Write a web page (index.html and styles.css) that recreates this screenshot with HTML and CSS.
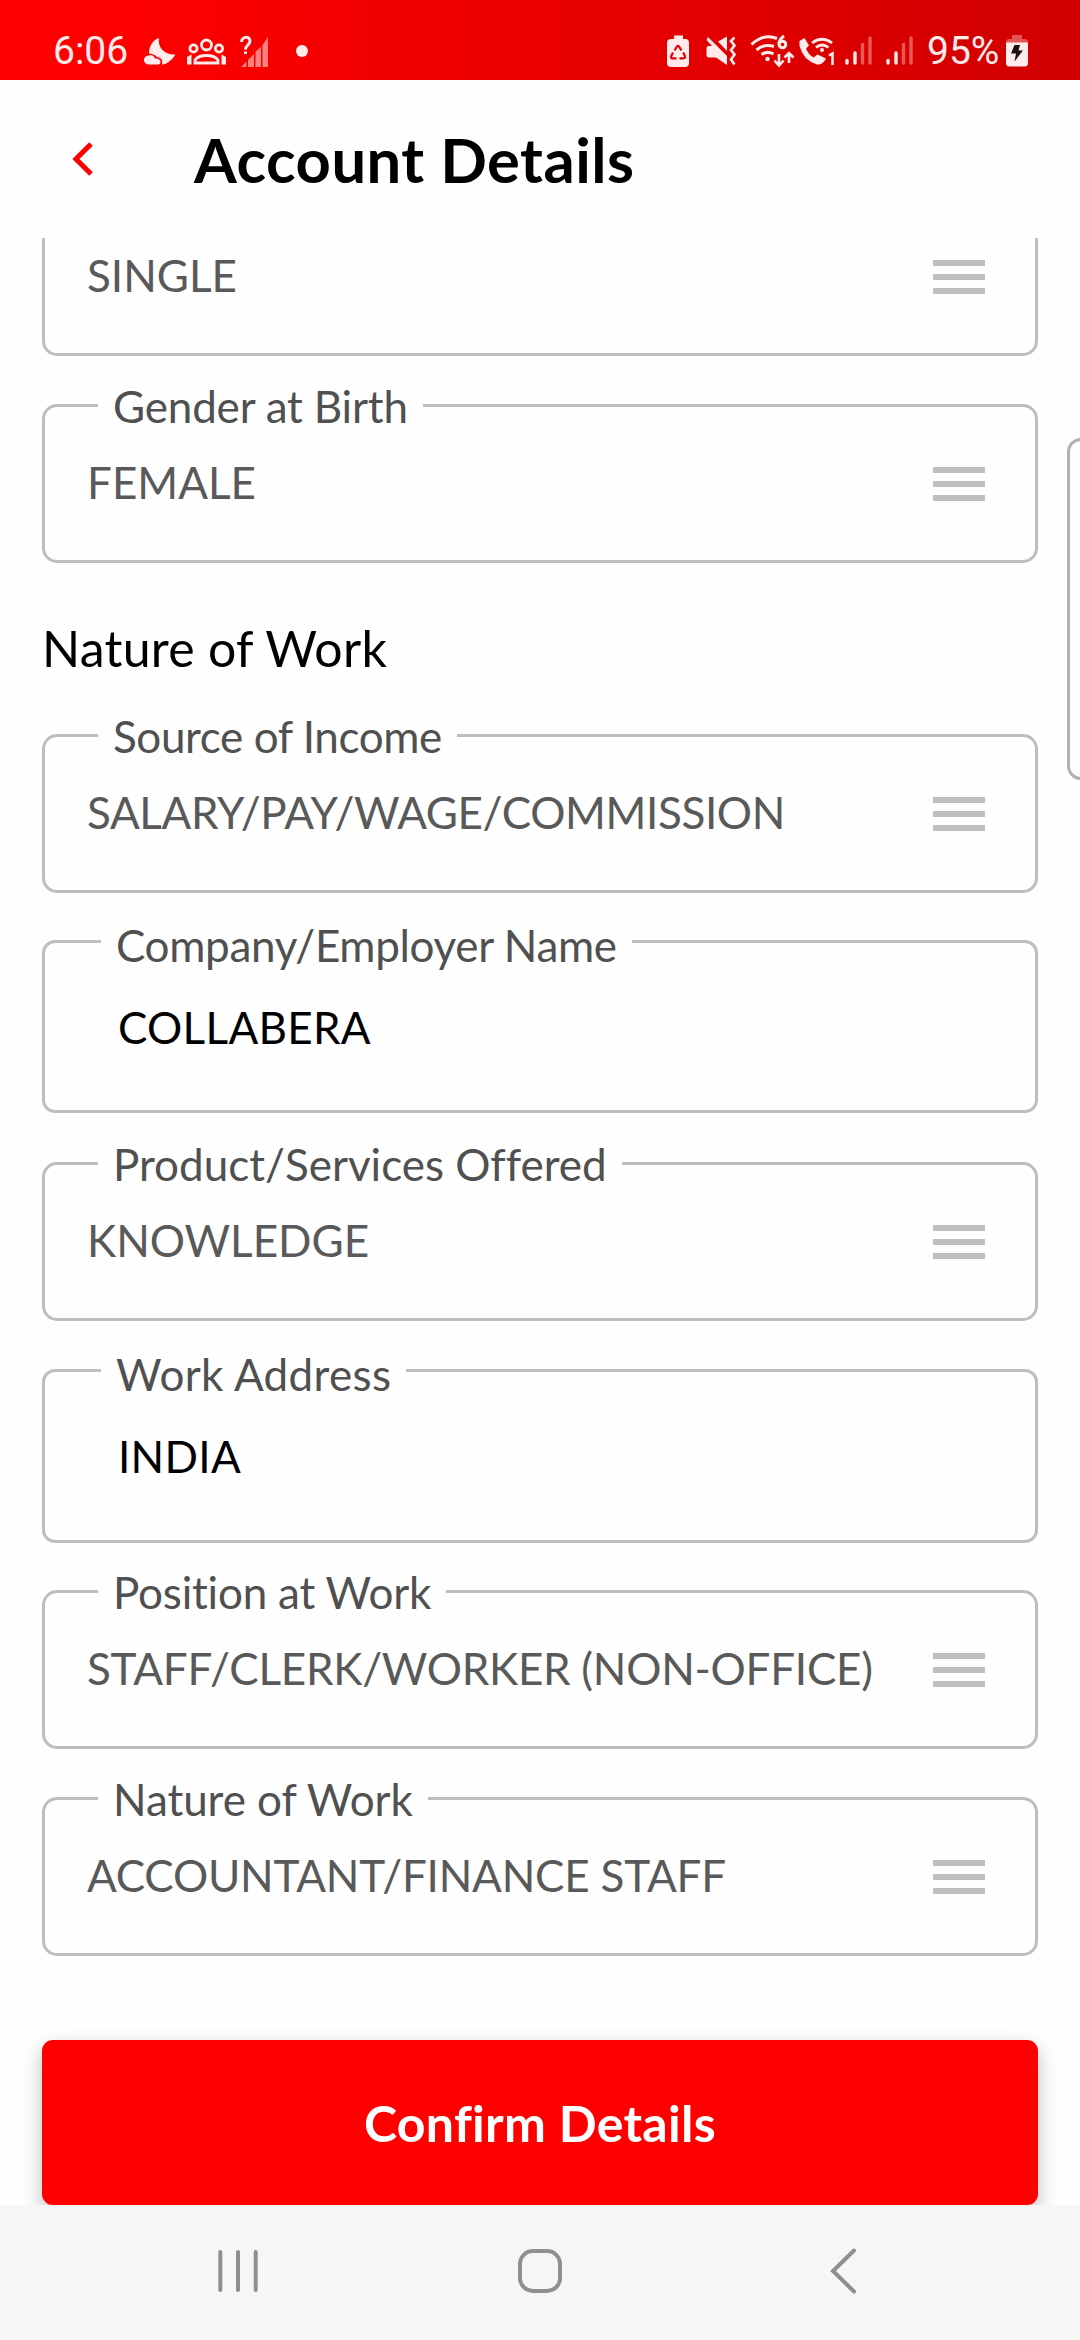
FILE: index.html
```html
<!DOCTYPE html>
<html lang="en">
<head>
<meta charset="utf-8">
<title>Account Details</title>
<link rel="stylesheet" href="styles.css">
</head>
<body>
<div class="screen">
  <div class="status-bar">
    <span class="status-text clock">6:06</span>
    <svg class="status-icons status-left" width="180" height="80" viewBox="140 0 180 80" fill="#ffebeb">
      <path d="M159 38C157.500 46 163 55 175.500 54.500C172 60 167 64.500 162 64.500C163 60 161 57.500 157 57C155 55 152 53.500 149 53.500C149 47 152 40.500 159 38Z"/>
      <path d="M148.500 64.500C142.500 64.500 142.500 55.500 148.500 55.500C151.500 54 154 56 155 58.500C161.500 57.500 162 64.500 158 64.500Z"/>
      <g fill="none" stroke="#ffebeb" stroke-width="2.800">
        <circle cx="206.500" cy="45" r="5"/>
        <circle cx="193.500" cy="48.500" r="3.600"/>
        <circle cx="219" cy="48.500" r="3.600"/>
        <path d="M195 63V60Q198 55.500 206.500 55.500T218 60V63Z"/>
      </g>
      <path d="M187 64.500V57L191.500 54.500V64.500ZM226 64.500V57L221.500 54.500V64.500Z"/>
      <path fill="#ff8080" d="M241 67L246.500 61.500V67ZM248 60L254 54V67H248ZM255.500 52L261 46.500V67H255.500ZM262.500 45L268 37V67H262.500Z"/>
      <path d="M241.500 42C242 36 250 36 250 41C250 45 245.500 45 245.500 49.500M245.500 51.500V54" fill="none" stroke="#ffebeb" stroke-width="3"/>
      <circle cx="302" cy="51" r="6"/>
    </svg>
    <svg class="status-icons status-right" width="260" height="80" viewBox="660 0 260 80" fill="#ffebeb">
      <path d="M674 35.500H683V39H685.500Q689 39 689 43V63Q689 67 685 67H671Q667 67 667 63V43Q667 39 671 39H674Z"/>
      <path fill="none" stroke="#df0000" stroke-width="2.200" d="M674.500 50.500L677 46.500Q678 45 679 46.500L681.500 50.500M683.200 52.500L685 56Q685.500 58.300 683.500 58.300H679.500M676.500 58.300H672.500Q670.500 58.300 671.300 56L673 52.500"/>
      <path d="M708 37L727 56V65L716 57.500H709Q706.500 57.500 706.500 55V48Q706.500 46 709 46H712L706.500 40ZM718 41.500L727 36.500V51Z"/>
      <path d="M734.500 37.500L731 41L734.500 45.500L731 50L734.500 54.500L731 59.500L734.500 64.500" fill="none" stroke="#ffebeb" stroke-width="2.600"/>
      <g fill="none" stroke="#ffebeb" stroke-width="3">
        <path d="M751.500 44.500Q764 33 777 38.500M756.500 50Q764 43.500 774 46.500M761.500 54.500Q767 50.500 773.500 54"/>
        <path d="M784 36Q778.500 40 779 44.500"/>
        <circle cx="782.500" cy="44.500" r="3.300"/>
        <path d="M779 54V65M774.500 60.500L779 65.500L783.500 60.500M789 63V53M784.500 57.500L789 53L793.500 57.500" stroke-width="2.600"/>
      </g>
      <circle cx="767.500" cy="59" r="2.200"/>
      <path d="M799.500 41L804.500 38L809 45.500L806 48.500Q808 54 813.500 57.500L817.500 54.500L826 58.500Q823 65 817 64.500Q803 60 799.500 46Z"/>
      <path d="M812 43Q822 35.500 832 43M816 47.500Q822 42.500 828.500 47.500" fill="none" stroke="#ffebeb" stroke-width="2.800"/>
      <circle cx="822" cy="50" r="2"/>
      <path d="M829 55.500L832.500 53.500V65" fill="none" stroke="#ffebeb" stroke-width="2.500"/>
      <g stroke="#ffebeb" stroke-width="3.400" stroke-linecap="round">
        <path d="M847 60.500V63M855 53V63M888 60.500V63M896 53V63"/>
        <path opacity=".38" d="M862.500 44.500V63M870 38V63M903.500 44.500V63M911 38V63"/>
      </g>
    </svg>
    <span class="status-text percent">95%</span>
    <svg class="battery" width="22" height="32" viewBox="0 0 22 32">
      <path fill="#e65555" d="M6 0H16V4H19Q22 4 22 8H0Q0 4 3 4H6Z"/>
      <path fill="#ffebeb" d="M0 7.500H22V28Q22 31.500 18.500 31.500H3.500Q0 31.500 0 28Z"/>
      <path fill="#1a1010" d="M8.500 10H14L12.500 15.500H17L8.500 26.500L10 18.500H5Z"/>
    </svg>
  </div>

  <header class="app-header">
    <svg class="back" width="22" height="34" viewBox="0 0 22 34"><path d="M19 2L4 17L19 32" fill="none" stroke="#f00" stroke-width="5"/></svg>
    <h1 class="title">Account Details</h1>
  </header>

  <main class="content">
    <section class="field select first">
      <span class="value">SINGLE</span><span class="menu"><i></i><i></i><i></i></span>
    </section>
    <section class="field select gender">
      <span class="label"><span>Gender at Birth</span></span>
      <span class="value">FEMALE</span><span class="menu"><i></i><i></i><i></i></span>
    </section>
    <h2 class="section-title">Nature of Work</h2>
    <section class="field select income">
      <span class="label"><span>Source of Income</span></span>
      <span class="value">SALARY/PAY/WAGE/COMMISSION</span><span class="menu"><i></i><i></i><i></i></span>
    </section>
    <section class="field input company">
      <span class="label"><span>Company/Employer Name</span></span>
      <span class="value">COLLABERA</span>
    </section>
    <section class="field select">
      <span class="label"><span>Product/Services Offered</span></span>
      <span class="value">KNOWLEDGE</span><span class="menu"><i></i><i></i><i></i></span>
    </section>
    <section class="field input address">
      <span class="label"><span>Work Address</span></span>
      <span class="value">INDIA</span>
    </section>
    <section class="field select position">
      <span class="label"><span>Position at Work</span></span>
      <span class="value">STAFF/CLERK/WORKER (NON-OFFICE)</span><span class="menu"><i></i><i></i><i></i></span>
    </section>
    <section class="field select nature">
      <span class="label"><span>Nature of Work</span></span>
      <span class="value">ACCOUNTANT/FINANCE STAFF</span><span class="menu"><i></i><i></i><i></i></span>
    </section>
    <button class="confirm">Confirm Details</button>
  </main>

  <nav class="nav-bar">
    <svg width="42" height="44" viewBox="0 0 42 44"><path d="M3.300 3V41M21 3V41M38.700 3V41" stroke="#8f8f8f" stroke-width="4" stroke-linecap="round"/></svg>
    <svg width="46" height="46" viewBox="0 0 46 46"><rect x="3" y="3" width="40" height="40" rx="13" fill="none" stroke="#8f8f8f" stroke-width="4"/></svg>
    <svg width="28" height="46" viewBox="0 0 28 46"><path d="M25 2.500L4 23L25 43.500" fill="none" stroke="#8f8f8f" stroke-width="4" stroke-linecap="round"/></svg>
  </nav>
  <div class="edge-handle"></div>
</div>
</body>
</html>
```
FILE: styles.css
```css
* { box-sizing: border-box; }
body { margin: 0; background: #fefefe; font-family: Lato, sans-serif; }
.screen {
  position: relative; width: 1080px; height: 2340px; overflow: hidden;
  display: flex; flex-direction: column; background: #fefefe;
}
.status-bar {
  height: 80px; flex: none; display: flex; align-items: center;
  padding-left: 53px; background: linear-gradient(90deg, #f00 10%, #d00000);
}
.status-icons { flex: none; }
.status-text {
  height: 80px; padding-top: 21px; font-family: Roboto, sans-serif;
  font-size: 39px; line-height: 60px; color: #ffebeb;
}
.clock { width: 87px; }
.status-right { margin-left: 340px; }
.percent { width: 79px; margin-left: 7px; }
.battery { margin-top: 22px; }
.app-header {
  height: 158px; flex: none; display: flex; align-items: center;
  padding-left: 72px; gap: 100px;
}
.title { margin: 0 0 1px; font-size: 61.500px; line-height: 74px; font-weight: 700; letter-spacing: .5px; color: #000; }
.content {
  flex: 1; min-height: 0; overflow: hidden; display: flex; flex-direction: column;
  padding: 0 42px; font-variant-ligatures: none;
}
.field {
  flex: none; height: 159px; border: 3px solid #bebebe; border-radius: 15px;
  display: flex; align-items: flex-start; margin-bottom: 48px; position: relative;
}
.field.first { margin-top: -41px; }
.field.input { border-radius: 13px; }
.field.company { height: 173px; margin: -1px 0 49px; }
.field.address { height: 174px; margin-bottom: 47px; }
.label {
  position: absolute; left: 53px; top: -27px; padding: 0 15px; height: 52px; line-height: 52px;
  font-size: 44px; color: #505050; background: #fefefe; white-space: nowrap;
}
.input .label { left: 56px; top: -24px; }
.value {
  flex: 1; padding: 48px 0 0 42px; font-size: 44px; line-height: 54px;
  color: #595959; white-space: nowrap;
}
.input .value { padding: 57px 0 0 73px; color: #000; letter-spacing: .3px; }
.gender .label { letter-spacing: -.17px; }
.income .label { letter-spacing: -.4px; }
.income .value { letter-spacing: -.37px; }
.company .label { letter-spacing: -.33px; }
.address .label { letter-spacing: .35px; }
.position .label { letter-spacing: -.2px; }
.position .value { letter-spacing: -.25px; }
.nature .label { letter-spacing: -.05px; }
.nature .value { letter-spacing: -.2px; }
.menu { width: 52px; margin: 60px 50px 0 0; display: flex; flex-direction: column; gap: 8px; }
.menu i { height: 6px; background: #bebebe; }
.section-title { margin: 17px 0 65px; font-size: 50px; line-height: 41px; height: 41px; font-weight: 400; letter-spacing: .25px; color: #000; }
.confirm {
  flex: none; height: 165px; margin-top: 36px; border: 0; border-radius: 11px; background: #f00; color: #fff;
  font-family: inherit; font-size: 50px; font-weight: 700; letter-spacing: .3px; font-variant-ligatures: normal;
  box-shadow: 0 8px 20px rgba(0, 0, 0, .26);
}
.nav-bar {
  position: relative; height: 135px; flex: none; display: flex; align-items: center;
  padding: 0 0 3px 217px; background: #f6f6f6;
}
.nav-bar svg:nth-child(2) { margin-left: 258px; }
.nav-bar svg:nth-child(3) { margin-left: 266px; }
.edge-handle {
  position: absolute; left: 1067px; top: 438px; width: 40px; height: 342px;
  border: 3px solid #b0b0b0; border-radius: 14px; background: #fefefe;
}
```
